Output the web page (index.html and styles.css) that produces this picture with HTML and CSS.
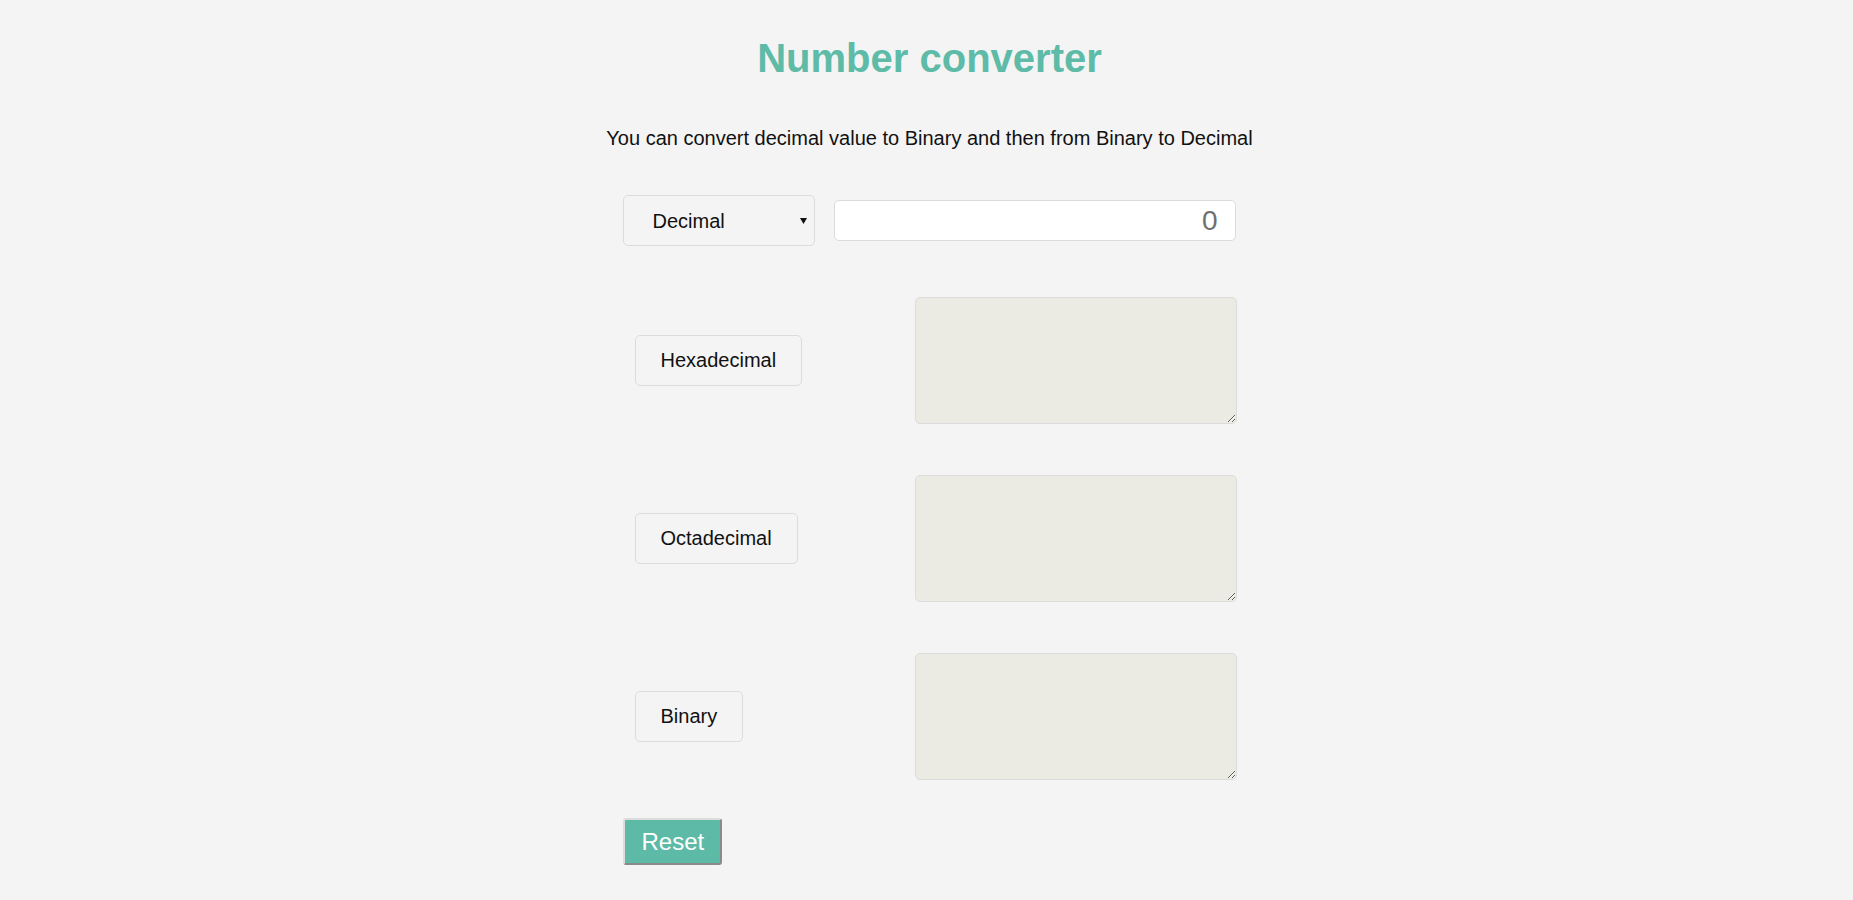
FILE: index.html
```html
<!DOCTYPE html>
<html lang="en">
<head>
<meta charset="utf-8">
<title>Number converter</title>
<link rel="stylesheet" href="styles.css">
</head>
<body>
  <h1 class="title">Number converter</h1>
  <p class="subtitle">You can convert decimal value to Binary and then from Binary to Decimal</p>
  <form class="converter">
    <div class="row row-top">
      <select class="base-select">
        <option>Decimal</option>
        <option>Hexadecimal</option>
        <option>Octadecimal</option>
        <option>Binary</option>
      </select>
      <input class="value-input" type="text" placeholder="0">
    </div>
    <div class="row">
      <button type="button" class="base-btn">Hexadecimal</button>
      <textarea class="result" readonly></textarea>
    </div>
    <div class="row">
      <button type="button" class="base-btn">Octadecimal</button>
      <textarea class="result" readonly></textarea>
    </div>
    <div class="row">
      <button type="button" class="base-btn">Binary</button>
      <textarea class="result" readonly></textarea>
    </div>
    <button type="reset" class="reset-btn">Reset</button>
  </form>
</body>
</html>
```
FILE: styles.css
```css
html, body {
  margin: 0;
  background: #f4f4f4;
}

body {
  padding: 0 0 0 6px;
  font-family: "Liberation Sans", Arial, sans-serif;
  color: #111;
}

.title {
  margin: 36px 0 0;
  font-size: 40px;
  line-height: 45px;
  font-weight: bold;
  text-align: center;
  color: #5dbba7;
}

.subtitle {
  margin: 46px 0 0;
  font-size: 20px;
  line-height: 23px;
  text-align: center;
}

.converter {
  width: 614px;
  margin: 45px auto 0;
  display: flex;
  flex-direction: column;
  align-items: flex-start;
}

.row {
  width: 100%;
  box-sizing: border-box;
  display: flex;
  align-items: center;
  justify-content: space-between;
  padding-left: 12px;
  margin-top: 51px;
}

.row-top {
  margin-top: 0;
  padding-left: 0;
  justify-content: flex-start;
  gap: 19px;
}

.base-select {
  -webkit-appearance: none;
  appearance: none;
  width: 192px;
  height: 51px;
  box-sizing: border-box;
  margin: 0;
  padding: 0 0 0 29px;
  font-family: "Liberation Sans", Arial, sans-serif;
  font-size: 20px;
  color: #111;
  border: 1px solid #dcdcdc;
  border-radius: 5px;
  background-color: #f4f4f4;
  background-image: url("data:image/svg+xml,%3Csvg xmlns='http://www.w3.org/2000/svg' width='7' height='6'%3E%3Cpath d='M0 0H7L3.5 6Z' fill='%23111'/%3E%3C/svg%3E");
  background-repeat: no-repeat;
  background-position: right 7px center;
}

.value-input {
  width: 402px;
  height: 41px;
  box-sizing: border-box;
  margin: 0;
  padding: 0 17px 0 10px;
  font-family: "Liberation Sans", Arial, sans-serif;
  font-size: 28px;
  text-align: right;
  color: #6f6f6f;
  background: #fff;
  border: 1px solid #dcdcdc;
  border-radius: 5px;
  outline: none;
}

.value-input::placeholder {
  color: #707070;
  opacity: 1;
}

.base-btn {
  margin: 0;
  padding: 13px 25px 13px;
  font-family: "Liberation Sans", Arial, sans-serif;
  font-size: 20px;
  line-height: 23px;
  color: #111;
  background: #f4f4f4;
  border: 1px solid #dcdcdc;
  border-radius: 5px;
}

.result {
  width: 322px;
  height: 127px;
  box-sizing: border-box;
  margin: 0;
  padding: 4px;
  background: #ebebe4;
  border: 1px solid #dcdcdc;
  border-radius: 5px;
  font-family: "Liberation Sans", Arial, sans-serif;
  font-size: 16px;
  outline: none;
}

.reset-btn {
  margin: 38px 0 0 0;
  padding: 8px 16px 7px 17px;
  font-family: "Liberation Sans", Arial, sans-serif;
  font-size: 24px;
  line-height: 28px;
  color: #fff;
  background: #5dbaa6;
  border-style: solid;
  border-width: 2px;
  border-color: #dcdcdc #8a8a8a #8a8a8a #dcdcdc;
  border-radius: 3px;
}
```
